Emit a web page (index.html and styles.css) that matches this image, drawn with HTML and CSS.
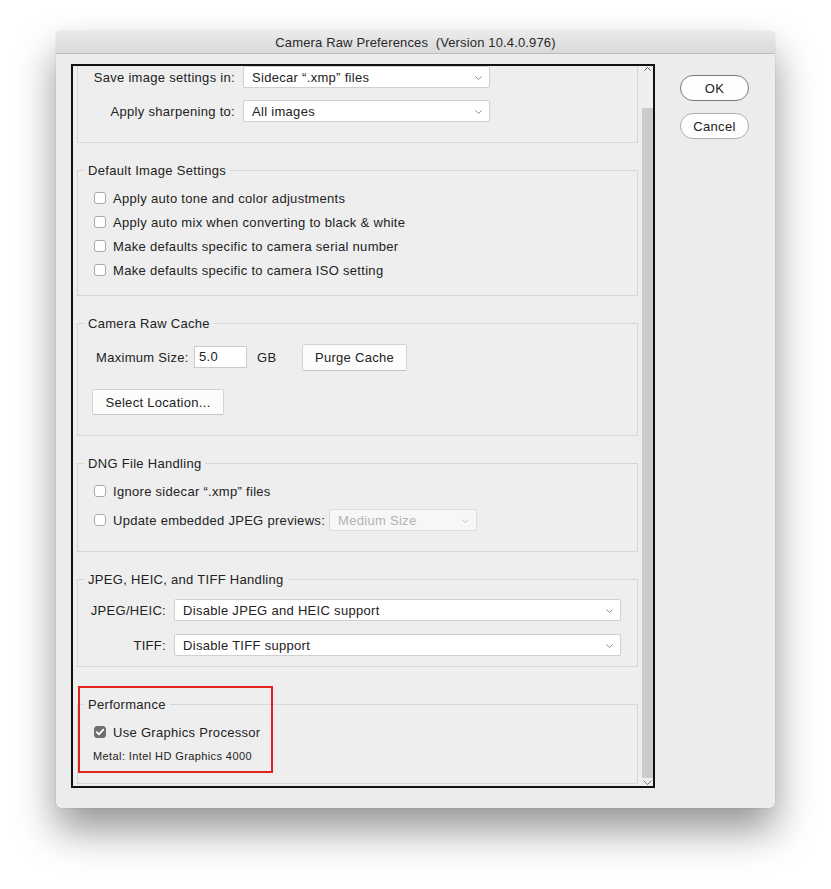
FILE: index.html
```html
<!DOCTYPE html>
<html lang="en">
<head>
<meta charset="utf-8">
<title>Camera Raw Preferences</title>
<link rel="stylesheet" href="styles.css">
</head>
<body>
<div class="window">
  <div class="titlebar">Camera Raw Preferences&nbsp; (Version 10.4.0.976)</div>
  <div class="body">
    <div class="panel">
      <div class="scroll">
        <div class="group first">
          <div class="row">
            <span class="rlabel w157">Save image settings in:</span>
            <div class="select w247"><span>Sidecar “.xmp” files</span><svg class="chev" viewBox="0 0 7 4" width="7" height="4"><path d="M0.5 0.5 L3.5 3.5 L6.5 0.5" fill="none" stroke="#8a8a8a" stroke-width="1"/></svg></div>
          </div>
          <div class="row gap12">
            <span class="rlabel w157">Apply sharpening to:</span>
            <div class="select w247"><span>All images</span><svg class="chev" viewBox="0 0 7 4" width="7" height="4"><path d="M0.5 0.5 L3.5 3.5 L6.5 0.5" fill="none" stroke="#8a8a8a" stroke-width="1"/></svg></div>
          </div>
        </div>

        <fieldset class="group g-default">
          <legend>Default Image Settings</legend>
          <label class="check-row"><span class="box"></span>Apply auto tone and color adjustments</label>
          <label class="check-row"><span class="box"></span>Apply auto mix when converting to black &amp; white</label>
          <label class="check-row"><span class="box"></span>Make defaults specific to camera serial number</label>
          <label class="check-row"><span class="box"></span>Make defaults specific to camera ISO setting</label>
        </fieldset>

        <fieldset class="group g-cache">
          <legend>Camera Raw Cache</legend>
          <div class="row cache-row">
            <span class="size-label">Maximum Size:</span>
            <div class="input">5.0</div>
            <span class="unit">GB</span>
            <div class="button purge">Purge Cache</div>
          </div>
          <div class="row loc-row">
            <div class="button loc">Select Location...</div>
          </div>
        </fieldset>

        <fieldset class="group g-dng">
          <legend>DNG File Handling</legend>
          <label class="check-row"><span class="box"></span>Ignore sidecar “.xmp” files</label>
          <div class="check-row second">
            <span class="box"></span><span class="dng-label">Update embedded JPEG previews:</span>
            <div class="select w148 disabled"><span>Medium Size</span><svg class="chev" viewBox="0 0 7 4" width="7" height="4"><path d="M0.5 0.5 L3.5 3.5 L6.5 0.5" fill="none" stroke="#c4c4c4" stroke-width="1"/></svg></div>
          </div>
        </fieldset>

        <fieldset class="group g-jpeg">
          <legend>JPEG, HEIC, and TIFF Handling</legend>
          <div class="row">
            <span class="rlabel w88">JPEG/HEIC:</span>
            <div class="select w447"><span>Disable JPEG and HEIC support</span><svg class="chev" viewBox="0 0 7 4" width="7" height="4"><path d="M0.5 0.5 L3.5 3.5 L6.5 0.5" fill="none" stroke="#8a8a8a" stroke-width="1"/></svg></div>
          </div>
          <div class="row gap13">
            <span class="rlabel w88">TIFF:</span>
            <div class="select w447"><span>Disable TIFF support</span><svg class="chev" viewBox="0 0 7 4" width="7" height="4"><path d="M0.5 0.5 L3.5 3.5 L6.5 0.5" fill="none" stroke="#8a8a8a" stroke-width="1"/></svg></div>
          </div>
        </fieldset>

        <div class="perf-wrap">
          <fieldset class="group g-perf">
            <legend>Performance</legend>
            <label class="check-row"><span class="box checked"><svg viewBox="0 0 12 12" width="12" height="12"><path d="M2.8 6.2 L5 8.4 L9.3 3.6" fill="none" stroke="#fff" stroke-width="1.8" stroke-linecap="round" stroke-linejoin="round"/></svg></span>Use Graphics Processor</label>
            <div class="metal">Metal: Intel HD Graphics 4000</div>
          </fieldset>
          <div class="highlight"></div>
        </div>
      </div>
      <div class="scrollbar">
        <div class="arrow up"><svg viewBox="0 0 7 4" width="7" height="4"><path d="M0.5 3.5 L3.5 0.5 L6.5 3.5" fill="none" stroke="#555" stroke-width="1"/></svg></div>
        <div class="thumb"></div>
        <div class="arrow down"><svg viewBox="0 0 9 5" width="9" height="5"><path d="M0.5 0.5 L4.5 4.5 L8.5 0.5" fill="none" stroke="#777" stroke-width="1"/></svg></div>
      </div>
    </div>
    <div class="actions">
      <div class="pill ok">OK</div>
      <div class="pill cancel">Cancel</div>
    </div>
  </div>
</div>
</body>
</html>
```

FILE: styles.css
```css
* { box-sizing: border-box; }

html, body {
  margin: 0;
  padding: 0;
  background: #ffffff;
}

body {
  font-family: "Liberation Sans", Arial, sans-serif;
  font-size: 13px;
  letter-spacing: 0.3px;
  color: #222222;
  width: 831px;
  height: 889px;
  overflow: hidden;
}

.window {
  margin: 31px 0 0 56px;
  width: 719px;
  height: 777px;
  background: #ececec;
  border-radius: 5px;
  box-shadow: 0 22px 40px rgba(0, 0, 0, 0.42), 0 0 1px rgba(0, 0, 0, 0.35);
  display: flex;
  flex-direction: column;
}

.titlebar {
  height: 23px;
  line-height: 24px;
  text-align: center;
  font-size: 13px;
  letter-spacing: 0.15px;
  color: #2a2a2a;
  background: linear-gradient(#ebebeb, #d9d9d9);
  border-bottom: 1px solid #bdbdbd;
  border-radius: 5px 5px 0 0;
}

.body {
  display: flex;
  padding: 10px 0 0 15px;
}

.panel {
  width: 584px;
  height: 724px;
  border: 2px solid #111111;
  background: #eeeeee;
  display: flex;
  overflow: hidden;
}

.scroll {
  width: 569px;
  height: 100%;
  overflow: hidden;
}

.scrollbar {
  width: 11px;
  height: 100%;
  display: flex;
  flex-direction: column;
  background: #efefef;
}

.scrollbar .arrow {
  display: flex;
  justify-content: center;
}

.scrollbar .arrow.up {
  height: 42px;
  padding-top: 1px;
}

.scrollbar .thumb {
  flex: 1;
  background: #cbcbcb;
}

.scrollbar .arrow.down {
  height: 8px;
  align-items: flex-end;
  padding-bottom: 1px;
}

/* groups */
.group {
  margin: 0 4px;
  border: 1px solid #d6d6d6;
  min-width: 0;
}

legend {
  font-size: 13px;
  line-height: 17px;
  padding: 0 4px;
  margin-left: -10px;
  color: #222222;
}

.group.first {
  margin-top: -20px;
  padding: 19px 0 20px 0;
}

.row {
  display: flex;
  align-items: center;
}

.gap12 { margin-top: 12px; }
.gap13 { margin-top: 13px; }

.rlabel {
  text-align: right;
  padding-right: 8px;
  flex: none;
}

.w157 { width: 165px; }
.w88 { width: 96px; }

.select {
  height: 22px;
  background: #ffffff;
  border: 1px solid #d0d0d0;
  border-radius: 2px;
  display: flex;
  align-items: center;
  justify-content: space-between;
  padding: 0 7px 0 8px;
  flex: none;
}

.select .chev { margin-top: 1px; }

.w247 { width: 247px; }
.w447 { width: 447px; }
.w148 { width: 148px; }

.select.disabled {
  color: #b2b2b2;
  background: #f7f7f7;
  border-color: #dddddd;
}

/* checkbox rows */
.check-row {
  display: flex;
  align-items: center;
  height: 24px;
}

.box {
  width: 12px;
  height: 12px;
  border: 1px solid #a9a9a9;
  border-radius: 3px;
  background: #ffffff;
  margin-right: 7px;
  flex: none;
  display: flex;
}

.box.checked {
  background: #6e6e6e;
  border-color: #6e6e6e;
  align-items: center;
  justify-content: center;
}

.box.checked svg { margin: -1px; }

.g-default {
  margin-top: 19px;
  padding: 7px 0 13px 16px;
}

/* cache */
.g-cache {
  margin-top: 19px;
  padding: 12px 0 20px 14px;
}

.g-cache legend { margin-left: -8px; }

.cache-row { height: 26px; padding-left: 4px; }

.size-label { width: 98px; flex: none; }

.input {
  width: 53px;
  height: 22px;
  background: #ffffff;
  border: 1px solid #cbcbcb;
  padding: 1px 0 0 4px;
  line-height: 18px;
  flex: none;
}

.unit {
  width: 55px;
  padding-left: 10px;
  flex: none;
}

.button {
  height: 26px;
  background: #fcfcfc;
  border: 1px solid #d3d3d3;
  border-bottom-color: #c4c4c4;
  border-radius: 2px;
  display: flex;
  align-items: center;
  justify-content: center;
  flex: none;
}

.purge { width: 105px; height: 27px; }

.loc-row { margin-top: 19px; }
.loc { width: 132px; }

/* dng */
.g-dng {
  margin-top: 19px;
  padding: 7px 0 20px 16px;
}

.check-row.second {
  margin-top: 6px;
  height: 22px;
}

.dng-label { width: 216px; flex: none; }

/* jpeg */
.g-jpeg {
  margin-top: 19px;
  padding: 11px 0 10px 0;
}

.g-jpeg legend { margin-left: 6px; }

/* performance */
.perf-wrap {
  position: relative;
  margin-top: 29px;
}

.g-perf {
  padding: 7px 0 20px 16px;
}

.metal {
  font-size: 11px;
  line-height: 14px;
  letter-spacing: 0.4px;
  margin: 5px 0 0 -1px;
}

.highlight {
  position: absolute;
  left: 5px;
  top: -10px;
  width: 195px;
  height: 87px;
  border: 2px solid #e0231c;
  pointer-events: none;
}

/* right buttons */
.actions {
  margin-left: 25px;
  padding-top: 11px;
  display: flex;
  flex-direction: column;
}

.pill {
  width: 69px;
  height: 26px;
  border-radius: 13px;
  background: #fdfdfd;
  display: flex;
  align-items: center;
  justify-content: center;
  font-size: 13px;
}

.pill.ok { border: 1px solid #7a7a7a; }
.pill.cancel { border: 1px solid #b0b0b0; margin-top: 12px; }
```
